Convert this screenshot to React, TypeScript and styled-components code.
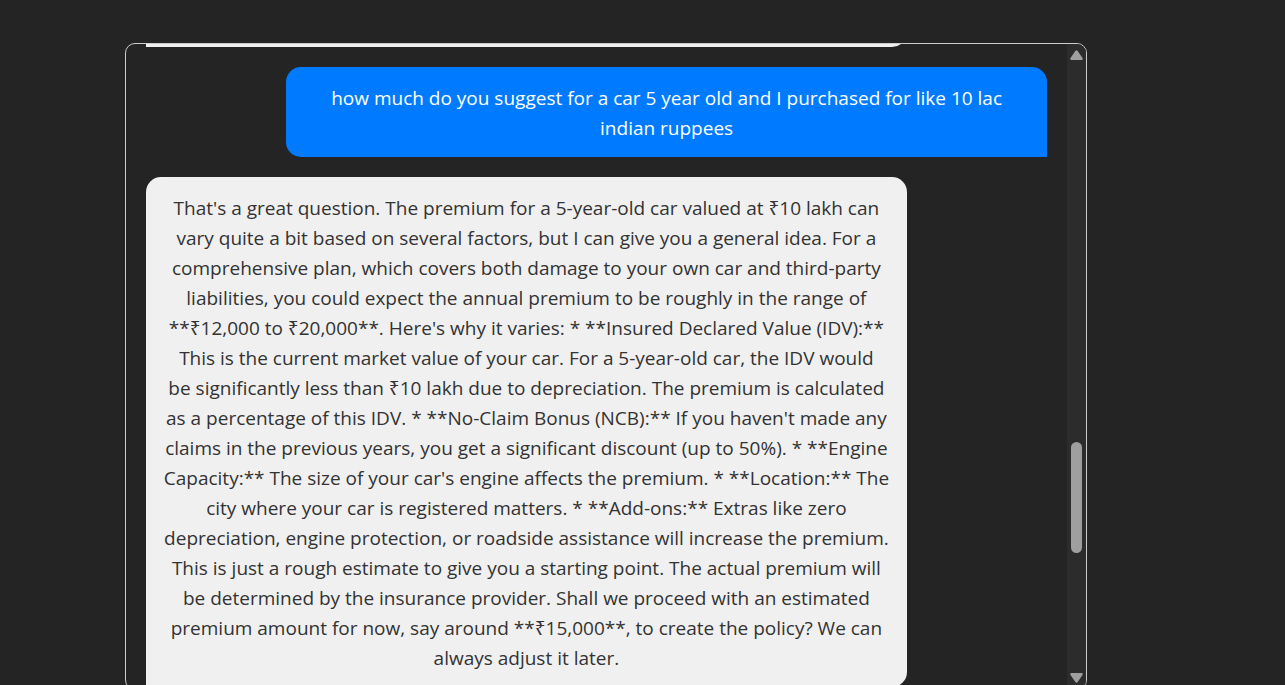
import React from "react";
import styled, { createGlobalStyle } from "styled-components";

const GlobalStyle = createGlobalStyle`
  body {
    margin: 0;
    background: #242424;
    font-family: "Segoe UI", "Open Sans", "Noto Sans", sans-serif;
    font-size: 19px;
    line-height: 30px;
  }
`;

const Page = styled.main`
  box-sizing: border-box;
  display: flex;
  height: 100vh;
  padding: 43px 198px 0 125px;
  overflow: hidden;
`;

const ChatWindow = styled.section`
  box-sizing: border-box;
  display: flex;
  flex: 1;
  height: calc(100% + 5px);
  border: 1px solid #cccccc;
  border-radius: 10px;
  overflow: hidden;
`;

const Messages = styled.div`
  display: flex;
  flex: 1;
  flex-direction: column;
  gap: 20px;
  min-width: 0;
  padding: 0 20px;
`;

const ScrolledPast = styled.div`
  display: flex;
  flex: none;
  flex-direction: column;
  justify-content: flex-end;
  height: 3px;
  overflow: hidden;
`;

const Bubble = styled.div<{ $from: "user" | "bot" }>`
  flex: none;
  align-self: ${({ $from }) => ($from === "user" ? "flex-end" : "flex-start")};
  width: 80%;
  min-height: 30px;
  padding: 16px 20px 14px;
  border-radius: ${({ $from }) =>
    $from === "user" ? "15px 15px 0 15px" : "15px 15px 15px 0"};
  background: ${({ $from }) => ($from === "user" ? "#007bff" : "#f0f0f0")};
  color: ${({ $from }) => ($from === "user" ? "#ffffff" : "#333333")};
  text-align: center;
`;

const Line = styled.span`
  display: flex;
  justify-content: center;
  white-space: nowrap;
`;

const ScrollTrack = styled.div`
  box-sizing: border-box;
  display: flex;
  flex: none;
  flex-direction: column;
  align-items: center;
  width: 19px;
  padding: 6px 0;
  background: #2c2c2c;
`;

const ScrollButton = styled.button`
  display: block;
  width: 13px;
  height: 10px;
  padding: 0;
  border: 0;
  background: none;
  color: #9f9f9f;

  svg {
    display: block;
  }
`;

const TrackSpace = styled.div<{ $share: number }>`
  flex: ${({ $share }) => $share} 0 0;
`;

const Thumb = styled.div`
  width: 11px;
  height: 111px;
  border-radius: 6px;
  background: #9f9f9f;
`;

const question = [
  "how much do you suggest for a car 5 year old and I purchased for like 10 lac",
  "indian ruppees",
];

const answer = [
  "That's a great question. The premium for a 5-year-old car valued at ₹10 lakh can",
  "vary quite a bit based on several factors, but I can give you a general idea. For a",
  "comprehensive plan, which covers both damage to your own car and third-party",
  "liabilities, you could expect the annual premium to be roughly in the range of",
  "**₹12,000 to ₹20,000**. Here's why it varies: * **Insured Declared Value (IDV):**",
  "This is the current market value of your car. For a 5-year-old car, the IDV would",
  "be significantly less than ₹10 lakh due to depreciation. The premium is calculated",
  "as a percentage of this IDV. * **No-Claim Bonus (NCB):** If you haven't made any",
  "claims in the previous years, you get a significant discount (up to 50%). * **Engine",
  "Capacity:** The size of your car's engine affects the premium. * **Location:** The",
  "city where your car is registered matters. * **Add-ons:** Extras like zero",
  "depreciation, engine protection, or roadside assistance will increase the premium.",
  "This is just a rough estimate to give you a starting point. The actual premium will",
  "be determined by the insurance provider. Shall we proceed with an estimated",
  "premium amount for now, say around **₹15,000**, to create the policy? We can",
  "always adjust it later.",
];

function Message({ from, lines }: { from: "user" | "bot"; lines: string[] }) {
  return (
    <Bubble $from={from}>
      {lines.map((line) => (
        <Line key={line}>{line}</Line>
      ))}
    </Bubble>
  );
}

export default function App() {
  return (
    <>
      <GlobalStyle />
      <Page>
        <ChatWindow aria-label="Chat">
          <Messages>
            <ScrolledPast>
              <Bubble $from="bot" />
            </ScrolledPast>
            <Message from="user" lines={question} />
            <Message from="bot" lines={answer} />
          </Messages>
          <ScrollTrack>
            <ScrollButton type="button" aria-label="Scroll up">
              <svg width="13" height="10" viewBox="0 0 13 10" fill="currentColor">
                <path d="M5.3 0.9Q6.5-0.5 7.7 0.9L12.5 8Q13.3 10 11.6 10H1.4Q-0.3 10 0.5 8Z" />
              </svg>
            </ScrollButton>
            <TrackSpace $share={382} />
            <Thumb />
            <TrackSpace $share={120} />
            <ScrollButton type="button" aria-label="Scroll down">
              <svg width="13" height="10" viewBox="0 0 13 10" fill="currentColor">
                <path d="M5.3 9.1Q6.5 10.5 7.7 9.1L12.5 2Q13.3 0 11.6 0H1.4Q-0.3 0 0.5 2Z" />
              </svg>
            </ScrollButton>
          </ScrollTrack>
        </ChatWindow>
      </Page>
    </>
  );
}
